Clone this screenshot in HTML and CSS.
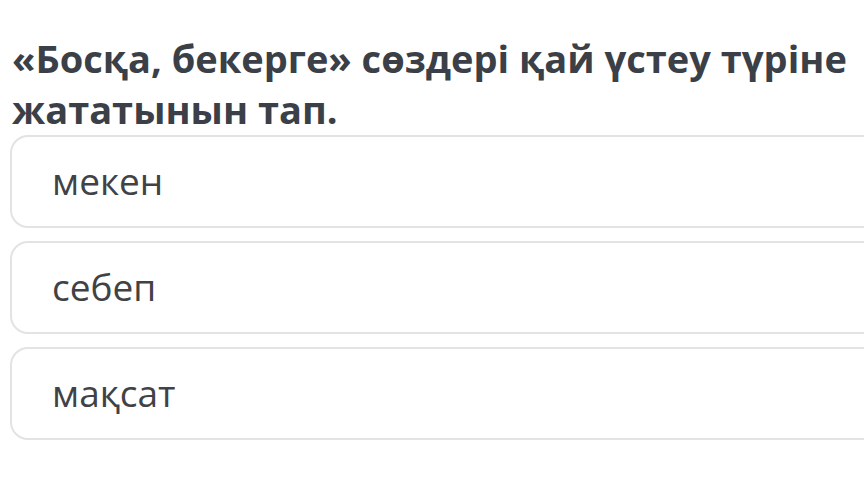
FILE: index.html
```html
<!DOCTYPE html>
<html lang="kk">
<head>
<meta charset="utf-8">
<link rel="stylesheet" href="styles.css">
</head>
<body>
<div class="page">
  <h1 class="question">«Босқа, бекерге» сөздері қай үстеу түріне жататынын тап.</h1>
  <div class="options">
    <div class="option">мекен</div>
    <div class="option">себеп</div>
    <div class="option">мақсат</div>
  </div>
</div>
</body>
</html>
```
FILE: styles.css
```css
html, body {
  margin: 0;
  padding: 0;
  background: #ffffff;
  overflow: hidden;
}
.page {
  width: 900px;
  padding: 33px 0 0 10px;
  font-family: "Open Sans", "Noto Sans", sans-serif;
}
.question {
  margin: 0;
  padding-left: 2px;
  width: 850px;
  font-size: 38px;
  font-weight: 700;
  line-height: 51px;
  color: #3b3f47;
}
.options {
  display: flex;
  flex-direction: column;
  gap: 13px;
  margin-top: 0;
}
.option {
  box-sizing: border-box;
  height: 93px;
  border: 2px solid #e3e3e3;
  border-radius: 18px;
  padding-left: 40px;
  padding-bottom: 2px;
  display: flex;
  align-items: center;
  font-size: 37px;
  color: #404246;
}
```
